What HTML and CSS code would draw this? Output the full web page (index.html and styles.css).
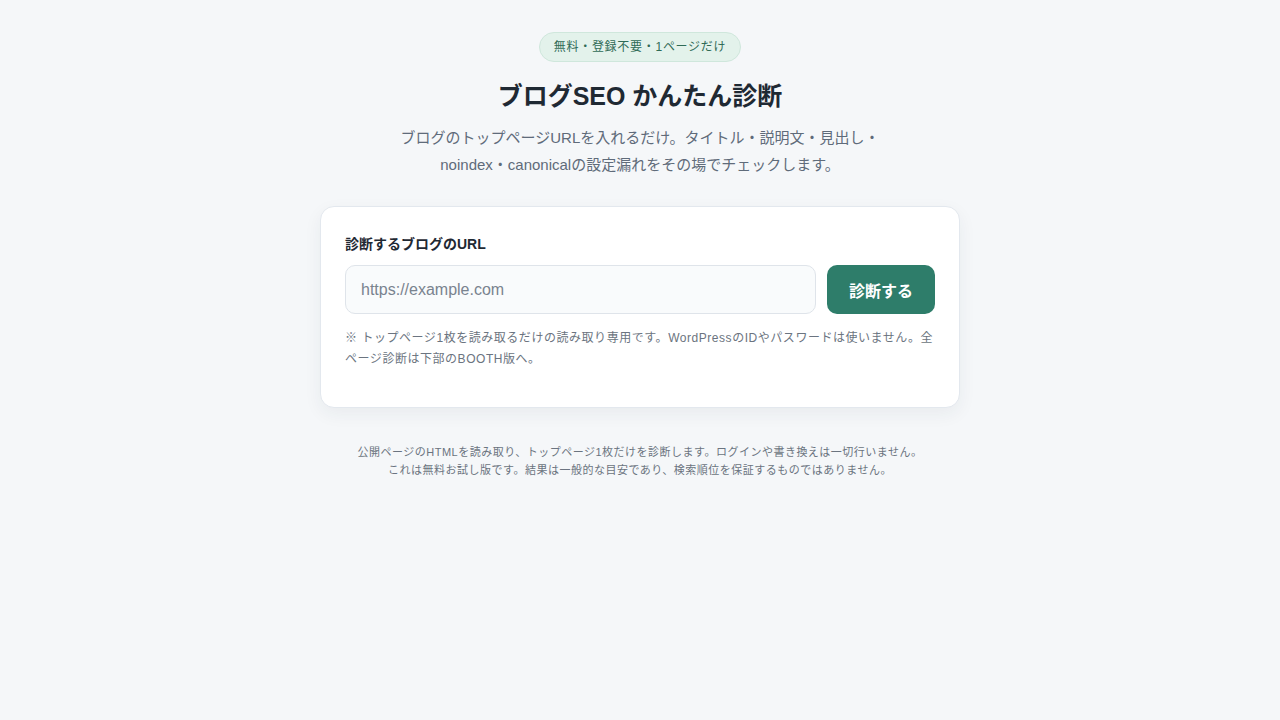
FILE: index.html
```html
<!DOCTYPE html>
<html lang="ja">
<head>
<meta charset="utf-8">
<title>ブログSEO かんたん診断</title>
<link rel="stylesheet" href="styles.css">
</head>
<body>
<main class="wrap">
  <header class="hero">
    <span class="badge">無料・登録不要・1ページだけ</span>
    <h1 class="title">ブログSEO かんたん診断</h1>
    <p class="lead">ブログのトップページURLを入れるだけ。タイトル・説明文・見出し・noindex・canonicalの設定漏れをその場でチェックします。</p>
  </header>
  <section class="card">
    <label class="label" for="url">診断するブログのURL</label>
    <div class="row">
      <input class="input" id="url" type="text" placeholder="https://example.com">
      <button class="btn" type="button">診断する</button>
    </div>
    <p class="note">※ トップページ1枚を読み取るだけの読み取り専用です。WordPressのIDやパスワードは使いません。全ページ診断は下部のBOOTH版へ。</p>
  </section>
  <footer class="foot">
    <span class="foot-line">公開ページのHTMLを読み取り、トップページ1枚だけを診断します。ログインや書き換えは一切行いません。</span>
    <span class="foot-line">これは無料お試し版です。結果は一般的な目安であり、検索順位を保証するものではありません。</span>
  </footer>
</main>
</body>
</html>
```
FILE: styles.css
```css
* { box-sizing: border-box; }
html, body { margin: 0; padding: 0; }
body {
  background: #f5f7f9;
  color: #1f2933;
  font-family: "Liberation Sans", "Noto Sans CJK JP", sans-serif;
}
.wrap {
  max-width: 640px;
  margin: 0 auto;
  padding: 32px 0 40px;
}
.hero {
  display: flex;
  flex-direction: column;
  align-items: center;
  text-align: center;
}
.badge {
  display: inline-block;
  padding: 6px 14px 5px;
  font-size: 12px;
  line-height: 17px;
  letter-spacing: 0.06em;
  color: #2f6a56;
  background: #e3f2eb;
  border: 1px solid #cfe7dc;
  border-radius: 999px;
}
.title {
  margin: 17px 0 0;
  font-size: 25px;
  line-height: 35px;
  font-weight: 700;
  color: #1f2933;
}
.lead {
  margin: 10px 0 0;
  max-width: 500px;
  font-size: 15px;
  line-height: 27px;
  color: #5f6b7a;
}
.card {
  margin-top: 28px;
  background: #ffffff;
  border: 1px solid #e3e8ee;
  border-radius: 14px;
  box-shadow: 0 6px 18px rgba(30, 45, 60, 0.06);
  padding: 26px 24px 37px;
}
.label {
  display: block;
  font-size: 14px;
  line-height: 22px;
  font-weight: 700;
  color: #1f2933;
  margin-bottom: 10px;
}
.row {
  display: flex;
  gap: 11px;
}
.input {
  flex: 1;
  height: 49px;
  padding: 0 15px;
  font-family: "Liberation Sans", "Noto Sans CJK JP", sans-serif;
  font-size: 16px;
  color: #1f2933;
  background: #f9fbfc;
  border: 1.5px solid #dfe4ea;
  border-radius: 10px;
  outline: none;
}
.input::placeholder { color: #79838f; }
.btn {
  width: 108px;
  height: 49px;
  border: 0;
  border-radius: 10px;
  background: #2e7d6a;
  color: #ffffff;
  font-family: "Liberation Sans", "Noto Sans CJK JP", sans-serif;
  font-size: 16px;
  font-weight: 700;
  cursor: pointer;
}
.note {
  margin: 14px 0 0;
  font-size: 12px;
  line-height: 21px;
  letter-spacing: 0.045em;
  color: #6b7480;
}
.foot {
  margin-top: 35px;
  text-align: center;
  font-size: 11px;
  line-height: 18px;
  letter-spacing: 0.045em;
  color: #6b7480;
}
.foot-line { display: block; }
```
